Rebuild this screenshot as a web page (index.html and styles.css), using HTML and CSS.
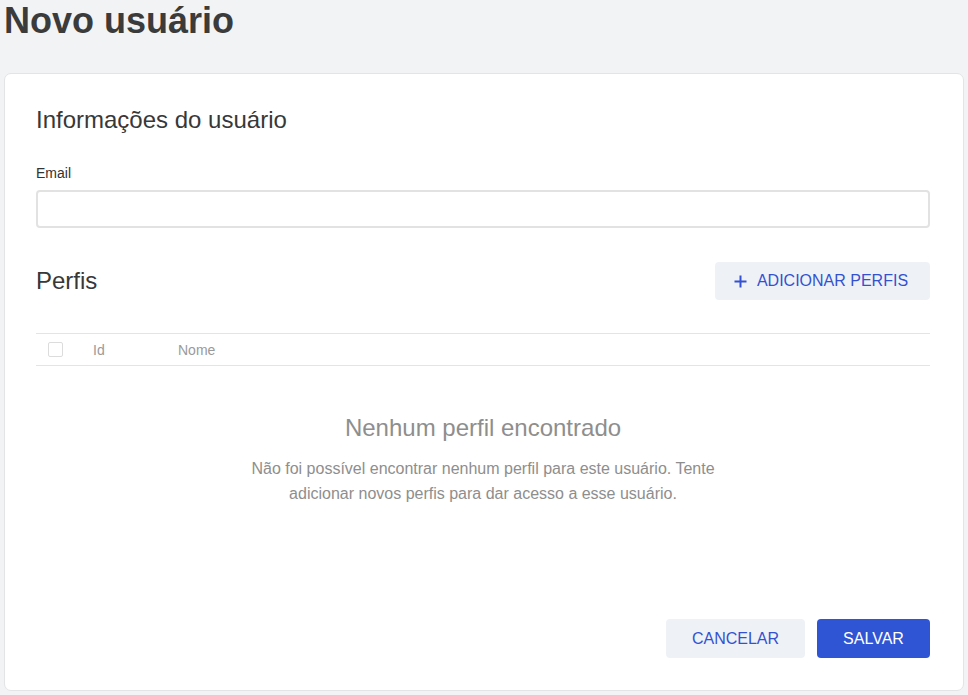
FILE: index.html
```html
<!DOCTYPE html>
<html lang="pt-BR">
<head>
<meta charset="utf-8">
<title>Novo usuário</title>
<link rel="stylesheet" href="styles.css">
</head>
<body>
<div class="page">
  <h1 class="page-title">Novo usuário</h1>
  <div class="card">
    <h2 class="section-title">Informações do usuário</h2>
    <label class="field-label" for="email">Email</label>
    <input class="field-input" id="email" type="text">

    <div class="profiles-head">
      <h2 class="section-title">Perfis</h2>
      <button class="btn btn-light btn-add" type="button">
        <svg class="plus" width="13" height="13" viewBox="0 0 13 13" aria-hidden="true"><path d="M6.5 0.5v12M0.5 6.5h12" stroke="currentColor" stroke-width="2" fill="none"/></svg>
        ADICIONAR PERFIS
      </button>
    </div>

    <div class="table-head">
      <span class="checkbox"></span>
      <span class="col-id">Id</span>
      <span class="col-name">Nome</span>
    </div>

    <div class="empty">
      <div class="empty-title">Nenhum perfil encontrado</div>
      <p class="empty-text">Não foi possível encontrar nenhum perfil para este usuário. Tente adicionar novos perfis para dar acesso a esse usuário.</p>
    </div>

    <div class="footer">
      <button class="btn btn-light btn-cancel" type="button">CANCELAR</button>
      <button class="btn btn-primary btn-save" type="button">SALVAR</button>
    </div>
  </div>
</div>
</body>
</html>
```

FILE: styles.css
```css
html, body {
  margin: 0;
  padding: 0;
  background: #f2f3f5;
  font-family: "Liberation Sans", Arial, sans-serif;
}

.page {
  padding: 0 4px 0 4px;
}

.page-title {
  margin: 0;
  font-size: 36px;
  font-weight: bold;
  line-height: 41px;
  color: #3b3b3b;
}

.card {
  margin-top: 32px;
  background: #fff;
  border: 1px solid #e3e4e6;
  border-radius: 7px;
  padding: 32px 33px 32px 31px;
  height: 552px;
  display: flex;
  flex-direction: column;
}

.section-title {
  margin: 0;
  font-size: 24px;
  font-weight: normal;
  line-height: 28px;
  color: #383838;
}

.field-label {
  display: block;
  margin-top: 31px;
  font-size: 14px;
  line-height: 16px;
  color: #333;
}

.field-input {
  display: block;
  box-sizing: border-box;
  margin-top: 9px;
  width: 100%;
  height: 38px;
  border: 2px solid #e2e2e2;
  border-radius: 4px;
  padding: 0 10px;
  font-family: inherit;
  font-size: 14px;
  outline: none;
}

.profiles-head {
  margin-top: 34px;
  display: flex;
  align-items: center;
  justify-content: space-between;
}

.btn {
  box-sizing: border-box;
  border: none;
  border-radius: 4px;
  font-family: inherit;
  font-size: 16px;
  cursor: pointer;
  display: inline-flex;
  align-items: center;
  justify-content: center;
}

.btn-light {
  background: #eef1f6;
  color: #3451d1;
}

.btn-primary {
  background: #2f54d4;
  color: #fff;
}

.btn-add {
  height: 38px;
  width: 215px;
  gap: 10px;
  padding: 0 3px 0 0;
}

.plus {
  display: block;
}

.table-head {
  margin-top: 33px;
  height: 33px;
  box-sizing: border-box;
  border-top: 1px solid #e4e4e4;
  border-bottom: 1px solid #e4e4e4;
  display: flex;
  align-items: center;
  font-size: 14px;
  color: #9a9a9a;
}

.checkbox {
  box-sizing: border-box;
  width: 15px;
  height: 15px;
  margin-left: 12px;
  border: 1px solid #dcdcdc;
  border-radius: 2px;
}

.col-id {
  margin-left: 30px;
  width: 85px;
}

.empty {
  margin-top: 48px;
  text-align: center;
}

.empty-title {
  font-size: 24px;
  line-height: 28px;
  color: #8e8e8e;
}

.empty-text {
  margin: 14px auto 0;
  max-width: 480px;
  font-size: 16px;
  line-height: 25px;
  color: #8e8e8e;
}

.footer {
  margin-top: auto;
  display: flex;
  justify-content: flex-end;
  gap: 12px;
}

.btn-cancel {
  width: 139px;
  height: 39px;
}

.btn-save {
  width: 113px;
  height: 39px;
}
```
